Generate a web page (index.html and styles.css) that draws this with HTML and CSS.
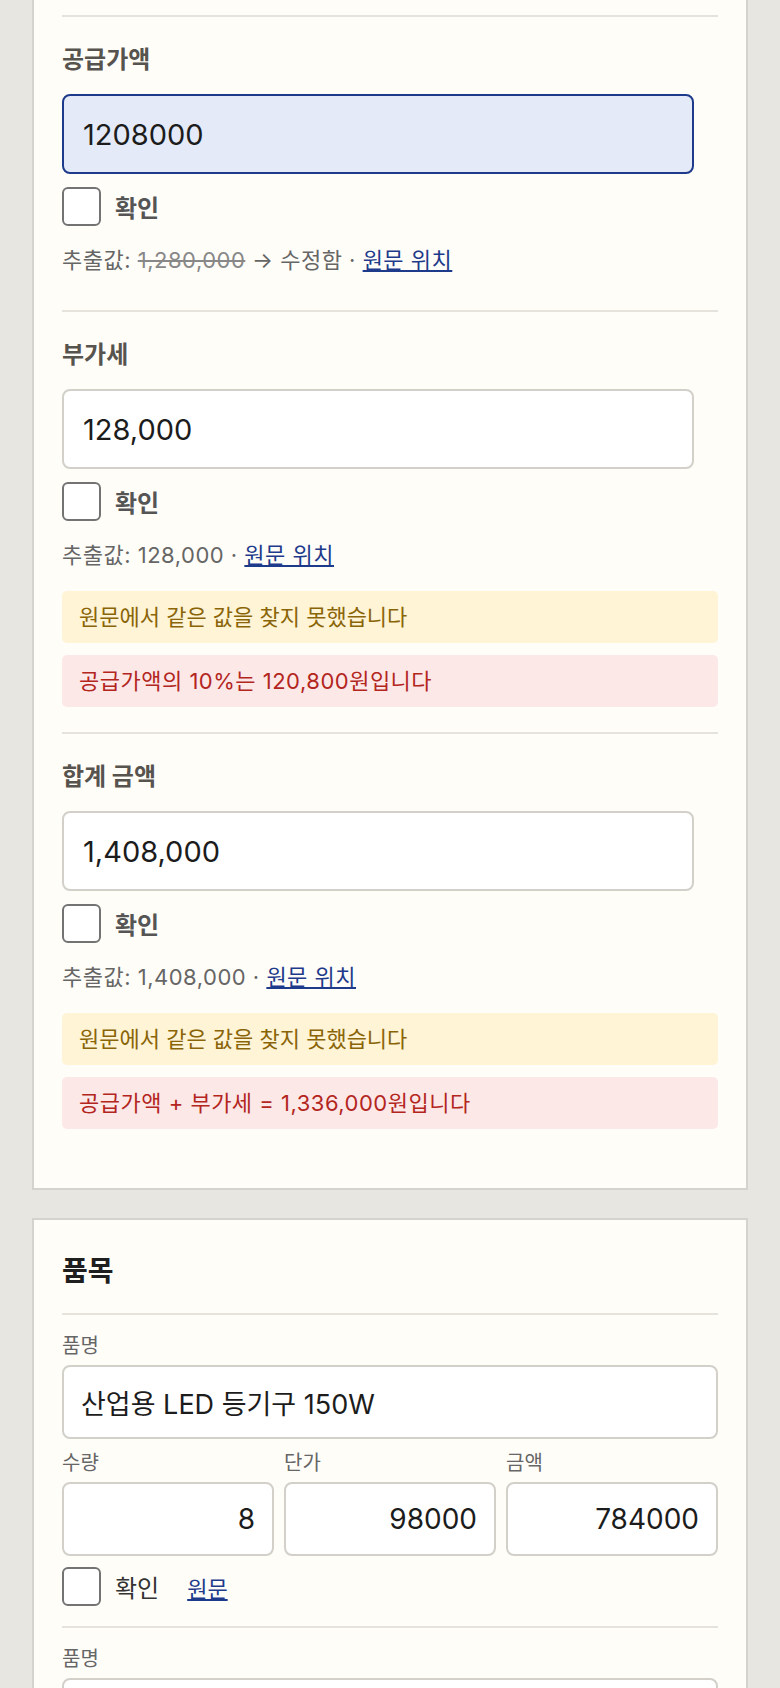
FILE: index.html
```html
<!DOCTYPE html>
<html lang="ko">
<head>
    <meta charset="UTF-8">
    <meta name="viewport" content="width=device-width, initial-scale=1.0">
    <title>세금계산서 검토</title>
    <link rel="stylesheet" href="styles.css">
</head>
<body>

<div class="card card-top">
    <div class="field">
        <div class="field-label">공급가액</div>
        <input class="amount-input edited" type="text" value="1208000">
        <label class="check"><span class="box"></span><span class="check-text">확인</span></label>
        <p class="meta">추출값: <s>1,280,000</s> → 수정함 · <a href="#">원문 위치</a></p>
    </div>

    <div class="field">
        <div class="field-label">부가세</div>
        <input class="amount-input" type="text" value="128,000">
        <label class="check"><span class="box"></span><span class="check-text">확인</span></label>
        <p class="meta">추출값: 128,000 · <a href="#">원문 위치</a></p>
        <div class="alert warn">원문에서 같은 값을 찾지 못했습니다</div>
        <div class="alert error">공급가액의 10%는 120,800원입니다</div>
    </div>

    <div class="field">
        <div class="field-label">합계 금액</div>
        <input class="amount-input" type="text" value="1,408,000">
        <label class="check"><span class="box"></span><span class="check-text">확인</span></label>
        <p class="meta">추출값: 1,408,000 · <a href="#">원문 위치</a></p>
        <div class="alert warn">원문에서 같은 값을 찾지 못했습니다</div>
        <div class="alert error">공급가액 + 부가세 = 1,336,000원입니다</div>
    </div>
</div>

<div class="card">
    <h2 class="card-title">품목</h2>

    <div class="item">
        <div class="small-label">품명</div>
        <input class="text-input" type="text" value="산업용 LED 등기구 150W">
        <div class="item-grid">
            <div>
                <div class="small-label">수량</div>
                <input class="text-input num" type="text" value="8">
            </div>
            <div>
                <div class="small-label">단가</div>
                <input class="text-input num" type="text" value="98000">
            </div>
            <div>
                <div class="small-label">금액</div>
                <input class="text-input num" type="text" value="784000">
            </div>
        </div>
        <label class="check"><span class="box"></span><span class="check-text plain">확인</span><a href="#" class="src-link">원문</a></label>
    </div>

    <div class="item">
        <div class="small-label">품명</div>
        <input class="text-input" type="text" value="">
    </div>
</div>

</body>
</html>
```

FILE: styles.css
```css
body {
    margin: 0;
    padding: 0 32px 40px;
    background-color: #e8e6e0;
    font-family: "Inter", "Noto Sans CJK KR", sans-serif;
    color: #222;
}
.card {
    background: #fffdf8;
    border: 2px solid #d5d3cd;
    padding: 33px 28px 34px;
    margin-bottom: 28px;
}
.card-top {
    border-top: none;
    padding-top: 15px;
}
.field {
    border-top: 2px solid #e6e3dd;
    padding: 26px 0 25px;
}
.field-label {
    font-size: 24px;
    font-weight: bold;
    line-height: 34px;
    color: #57534e;
    margin-bottom: 17px;
}
input {
    font-family: inherit;
    box-sizing: border-box;
    outline: none;
}
.amount-input {
    display: block;
    width: 100%;
    max-width: 632px;
    height: 80px;
    padding: 0 19px;
    font-size: 29px;
    color: #1c1c1c;
    background: #fff;
    border: 2px solid #d3d0ca;
    border-radius: 8px;
}
.amount-input.edited {
    background: #e4eaf7;
    border-color: #1e3a8a;
}
.check {
    display: flex;
    align-items: center;
    margin-top: 13px;
    height: 39px;
}
.box {
    width: 39px;
    height: 39px;
    box-sizing: border-box;
    border: 2px solid #737373;
    border-radius: 6px;
    background: #fff;
}
.check-text {
    margin-left: 14px;
    font-size: 24px;
    font-weight: bold;
    color: #555;
}
.check-text.plain {
    font-weight: normal;
    color: #333;
}
.src-link {
    margin-left: 28px;
    font-size: 22px;
    color: #1e3a8a;
}
.meta {
    margin: 19px 0 10px;
    font-size: 22px;
    line-height: 30px;
    letter-spacing: 0.5px;
    color: #666;
}
.meta s {
    color: #888;
}
.meta a {
    color: #1e3a8a;
}
.alert {
    margin-top: 21px;
    padding: 0 17px;
    height: 52px;
    line-height: 52px;
    font-size: 22px;
    border-radius: 5px;
}
.alert + .alert {
    margin-top: 12px;
}
.warn {
    background: #fff4d6;
    color: #8a6508;
}
.error {
    background: #fde8e8;
    color: #b3261e;
    letter-spacing: 0.5px;
}
.card-title {
    margin: 0 0 24px;
    font-size: 28px;
    line-height: 36px;
    color: #1f1f1f;
}
.item {
    border-top: 2px solid #e6e3dd;
    padding: 17px 0 20px;
}
.small-label {
    font-size: 20px;
    line-height: 28px;
    color: #666;
    margin-bottom: 5px;
}
.text-input {
    display: block;
    width: 100%;
    height: 74px;
    padding: 0 17px;
    font-size: 27px;
    color: #1c1c1c;
    background: #fff;
    border: 2px solid #d3d0ca;
    border-radius: 8px;
}
.text-input.num {
    text-align: right;
    padding-right: 17px;
    font-size: 28px;
}
.item-grid {
    display: grid;
    grid-template-columns: 1fr 1fr 1fr;
    gap: 10px;
    margin-top: 10px;
}
.item .check {
    margin-top: 11px;
}
```
